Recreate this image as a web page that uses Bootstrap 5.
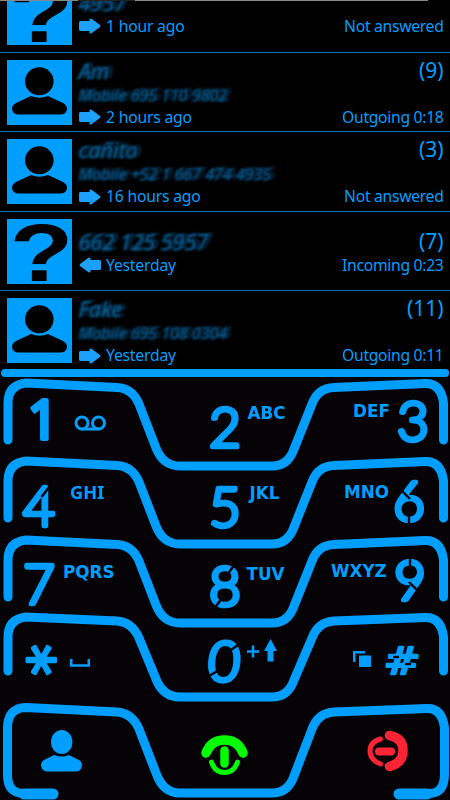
<!DOCTYPE html>
<html lang="en">
<head>
<meta charset="utf-8">
<meta name="viewport" content="width=device-width, initial-scale=1">
<title>Phone</title>
<link href="https://cdn.jsdelivr.net/npm/bootstrap@5.3.0/dist/css/bootstrap.min.css" rel="stylesheet">
<style>
:root{--neon:#009fff}
body{background:#050305;color:var(--neon);font-family:"Noto Sans","Open Sans",sans-serif}
.phone{width:450px;height:800px}
.call-list{height:370px;background:#000}
.strip{height:1px;background:linear-gradient(90deg,#888 0 78px,#222 78px 135px,#888 135px 428px,#000 428px);z-index:2}
.call{height:79.6px;flex:none;border-top:1px solid #0072b8;padding:7px 6.5px 0 7px}
.avatar{width:65px;height:65px;background:var(--neon)}
.info{padding-left:6px;height:72px;margin-top:-1px}
.who{font-size:21.5px;line-height:24px}
.num{font-size:16px;line-height:22px;padding-top:1px}
.smudge{color:#0b6aa8;font-style:italic;filter:blur(1.1px);opacity:.9;text-shadow:4px -1px 1px #04395c,-2px 1px 1px #04395c;white-space:nowrap;padding-left:1px}
.count{font-size:21px;line-height:24px;margin-top:-1px}
.when{font-size:15.7px;line-height:22px;letter-spacing:-.2px}
.when span+span{letter-spacing:-.3px}
.when svg{margin:-3px 5px 0 1px}
.solo{padding-top:12px}
.bar{height:8px;margin:-1px 1px 0;border-radius:4px;background:var(--neon);z-index:1}
.keypad{display:grid;grid-template-rows:78px 78.5px 77.5px 91px 97px}
.keyrow{display:grid;grid-template-columns:200px 100px 150px}
.outline{top:0;left:0;overflow:visible;pointer-events:none;fill:none;stroke:var(--neon);stroke-width:9;stroke-linecap:round;stroke-linejoin:round}
.key{position:relative}
.key svg{flex:none;overflow:visible}
.key b{font:bold 16.8px/20px "DejaVu Sans",sans-serif}
.key b.serifed{font:bold 18.3px/20px "Noto Sans",sans-serif}
.digit text{font:300 55px Lato,sans-serif;fill:var(--neon);stroke:var(--neon);stroke-width:4.5;stroke-linejoin:round;text-anchor:middle}
.digit line{stroke:#050305;stroke-width:2.4}
.k1{padding:18px 0 0 25px}.k1 .ic{margin:19px 0 0 15px}
.k2{padding:26px 0 0 7.5px}.k2 b{margin:-1px 0 0 6px}
.k3{padding:20px 0 0 53px}.k3 b{margin:3px 6px 0 0}
.k4{padding:27px 0 0 22px}.k4 b{margin:-1px 0 0 14px}
.k5{padding:28px 0 0 7.5px}.k5 b{margin:-1px 0 0 8px}
.k6{padding:22px 0 0 44px}.k6 b{margin:4px 3px 0 0}
.k7{padding:26px 0 0 22px}.k7 b{margin:1px 0 0 7px}
.k8{padding:28px 0 0 7.5px}.k8 b{margin:1px 0 0 5px}
.k9{padding:22px 0 0 31px}.k9 b{margin:4px 6px 0 0}
.ks{padding:31px 0 0 23px}.ks .ic{margin:16px 0 0 11px}
.k0{padding:26px 0 0 7px}.k0 .ic{margin:1px 0 0 6px}
.kh{padding:32px 0 0 53px}.kh .ic{margin:7px 13px 0 0}
.kc{padding:27px 0 0 41px}.kg{padding:32px 0 0 1px}.kr{padding:27px 0 0 67px}
.digit .star{font:62px "DejaVu Sans";stroke-width:3}
.digit .hash{font:38px "DejaVu Sans";stroke-width:2.6}
.digit .plain{font:400 54px "Noto Sans",sans-serif;stroke-width:4}
</style>
<script src="https://cdn.jsdelivr.net/npm/bootstrap@5.3.0/dist/js/bootstrap.bundle.min.js"></script>
</head>
<body>
<svg width="0" height="0" class="position-absolute">
<symbol id="person" viewBox="0 0 65 65"><ellipse cx="32.3" cy="21.3" rx="14.3" ry="14"/><path d="M24 36q8.500 3.500 17 0L56 43q4 2 4 6-.5 5-6 5.500H11q-5.500-.5-6-5.500 0-4 4-6z"/></symbol>
<symbol id="arrow" viewBox="0 0 22 16"><path d="M1.500 3h9V1.500Q10.500 0 12.500 .7l8.500 6.300q1 1 0 2l-8.500 6.300q-2 .7-2-.8V13h-9Q0 13 0 11.500V4.500Q0 3 1.500 3z" fill="#1ca0fa"/></symbol>
</svg>
<main class="phone position-relative overflow-hidden d-flex flex-column">
<div class="strip position-absolute top-0 start-0 w-100"></div>
<section class="call-list d-flex flex-column justify-content-end overflow-hidden">
  <article class="call d-flex">
    <svg class="avatar"><text transform="translate(2.500 62) scale(1.290 1)" font-family="Liberation Sans" font-weight="bold" font-size="81">?</text></svg>
    <div class="info flex-grow-1 solo">
      <div class="d-flex justify-content-between"><span class="who smudge">4957</span></div>
      <div class="when d-flex justify-content-between"><span><svg width="22" height="16"><use href="#arrow"/></svg>1 hour ago</span><span>Not answered</span></div>
    </div>
  </article>
  <article class="call d-flex">
    <svg class="avatar"><use href="#person"/></svg>
    <div class="info flex-grow-1">
      <div class="d-flex justify-content-between"><span class="who smudge">Am</span><span class="count">(9)</span></div>
      <div class="num smudge">Mobile 695 110 9802</div>
      <div class="when d-flex justify-content-between"><span><svg width="22" height="16"><use href="#arrow"/></svg>2 hours ago</span><span>Outgoing 0:18</span></div>
    </div>
  </article>
  <article class="call d-flex">
    <svg class="avatar"><use href="#person"/></svg>
    <div class="info flex-grow-1">
      <div class="d-flex justify-content-between"><span class="who smudge">cañito</span><span class="count">(3)</span></div>
      <div class="num smudge">Mobile +52 1 667 474 4935</div>
      <div class="when d-flex justify-content-between"><span><svg width="22" height="16"><use href="#arrow"/></svg>16 hours ago</span><span>Not answered</span></div>
    </div>
  </article>
  <article class="call d-flex">
    <svg class="avatar"><text transform="translate(2.500 62) scale(1.290 1)" font-family="Liberation Sans" font-weight="bold" font-size="81">?</text></svg>
    <div class="info flex-grow-1 solo">
      <div class="d-flex justify-content-between"><span class="who smudge">662 125 5957</span><span class="count">(7)</span></div>
      <div class="when d-flex justify-content-between"><span><svg width="22" height="16"><use href="#arrow" transform="translate(22) scale(-1 1)"/></svg>Yesterday</span><span>Incoming 0:23</span></div>
    </div>
  </article>
  <article class="call d-flex">
    <svg class="avatar"><use href="#person"/></svg>
    <div class="info flex-grow-1">
      <div class="d-flex justify-content-between"><span class="who smudge">Fake</span><span class="count">(11)</span></div>
      <div class="num smudge">Mobile 695 108 0304</div>
      <div class="when d-flex justify-content-between"><span><svg width="22" height="16"><use href="#arrow"/></svg>Yesterday</span><span>Outgoing 0:11</span></div>
    </div>
  </article>
</section>
<div class="bar"></div>
<section class="keypad mt-auto">
  <div class="keyrow position-relative">
    <svg class="outline position-absolute" width="450" height="90"><path d="M8 62V25Q8 7 26 5L117 9.500Q132 10 139 26L156 70Q163 88 180 88H272Q288 88 294 71L312 26Q318 10 334 9.500L425 5.500Q441 5 443.500 25V62"/></svg>
    <div class="key k1 d-flex align-items-start"><svg class="digit" width="34" height="46"><text class="plain" x="18" y="43">1</text></svg>
      <svg class="ic" width="32" height="16" fill="none" stroke="#009fff" stroke-width="3"><circle cx="8" cy="8" r="6"/><circle cx="24.500" cy="8" r="6"/><path d="M8 14H24.500"/></svg></div>
    <div class="key k2 d-flex align-items-start"><svg class="digit" width="34" height="46"><text x="17" y="43">2</text></svg><b>ABC</b></div>
    <div class="key k3 d-flex align-items-start"><b>DEF</b><svg class="digit" width="34" height="46"><text x="17" y="43">3</text></svg></div>
  </div>
  <div class="keyrow position-relative">
    <svg class="outline position-absolute" width="450" height="90"><path d="M8 62V25Q8 7 26 5L117 9.500Q132 10 139 26L156 70Q163 88 180 88H272Q288 88 294 71L312 26Q318 10 334 9.500L425 5.500Q441 5 443.500 25V62"/></svg>
    <div class="key k4 d-flex align-items-start"><svg class="digit" width="34" height="46"><text x="17" y="43">4</text><line x1="19.500" y1="14" x2="28" y2="3"/></svg><b class="serifed">GHI</b></div>
    <div class="key k5 d-flex align-items-start"><svg class="digit" width="34" height="46"><text x="17" y="43">5</text></svg><b>JKL</b></div>
    <div class="key k6 d-flex align-items-start"><b>MNO</b><svg class="digit" width="34" height="46"><text x="17" y="43">6</text><line x1="17" y1="35" x2="17" y2="47"/><line x1="10" y1="13" x2="18" y2="21"/></svg></div>
  </div>
  <div class="keyrow position-relative">
    <svg class="outline position-absolute" width="450" height="90"><path d="M8 62V25Q8 7 26 5L117 9.500Q132 10 139 26L156 70Q163 88 180 88H272Q288 88 294 71L312 26Q318 10 334 9.500L425 5.500Q441 5 443.500 25V62"/></svg>
    <div class="key k7 d-flex align-items-start"><svg class="digit" width="34" height="46"><text x="17" y="43">7</text></svg><b>PQRS</b></div>
    <div class="key k8 d-flex align-items-start"><svg class="digit" width="34" height="46"><text x="17" y="43">8</text><line x1="19" y1="12" x2="27" y2="1"/><line x1="6" y1="46" x2="14" y2="35"/></svg><b>TUV</b></div>
    <div class="key k9 d-flex align-items-start"><b>WXYZ</b><svg class="digit" width="34" height="46"><text x="17" y="43">9</text><line x1="17" y1="0" x2="17" y2="11"/><line x1="16" y1="25" x2="24" y2="33"/></svg></div>
  </div>
  <div class="keyrow position-relative">
    <svg class="outline position-absolute" width="450" height="90"><path d="M8 59V25Q8 7 26 5L117 9Q132 10 139 26L156 67Q163 85 180 85H272Q288 85 294 68L312 26Q318 10 334 9L425 5.500Q441 5 443.500 25V59"/></svg>
    <div class="key ks d-flex align-items-start"><svg class="digit" width="36" height="34"><text class="star" transform="translate(18 17) rotate(90)" x="0" y="32">*</text></svg>
      <svg class="ic" width="20" height="8" fill="none" stroke="#009fff" stroke-width="2.500"><path d="M1.250 0V6.500H18.750V0"/></svg></div>
    <div class="key k0 d-flex align-items-start"><svg class="digit" width="34" height="46"><text x="17" y="43" transform="translate(2) skewX(-4)">0</text><line x1="21" y1="14" x2="31" y2="7"/><line x1="2" y1="38" x2="12" y2="32"/></svg>
      <svg class="ic" width="30" height="23"><path d="M0 12.500H12M6 6.500V18.500" stroke="#009fff" stroke-width="2.500"/><path d="M23.500 0L30 12H26.500V22.500H20.500V12H17z" fill="#009fff"/></svg></div>
    <div class="key kh d-flex align-items-start"><svg class="ic" width="18" height="16"><path d="M1.250 11V1.250H12" fill="none" stroke="#009fff" stroke-width="2.500"/><path d="M6 4.500H18V16H6z" fill="#009fff"/></svg>
      <svg class="digit" width="36" height="32"><text class="hash" transform="translate(18 30) scale(1.150 1)">#</text><line x1="9" y1="13" x2="15" y2="13"/><line x1="21" y1="20" x2="27" y2="20"/></svg></div>
  </div>
  <div class="keyrow position-relative">
    <svg class="outline position-absolute" width="450" height="97"><path d="M53 90.500H24Q7.500 90 7.500 72V25Q7.500 5 26 4.500L117 9Q132 10 139 26L156 70Q163 90 180 90H272Q288 90 294 73L312 26Q318 10 334 9L427 5.500Q442 5 444.500 25V72Q444 90 430 90.500H399"/><path d="M53 91H24M427 91H399" stroke-width="11"/></svg>
    <div class="key kc"><svg width="41" height="42" fill="#009fff"><ellipse cx="20.700" cy="12" rx="10.700" ry="12"/><path d="M13 25q8 3 15 0l10 5q3 2 3 5-.5 6-6 6.500H6q-5.500-.5-6-6.500 0-3 3-5z"/></svg></div>
    <div class="key kg"><svg width="47" height="41" fill="none" stroke="#0f0" stroke-linecap="round"><path d="M5 18Q10 5 23.500 5T42 18" stroke-width="9.500"/><path d="M10.500 27Q14 37.500 23.500 37.500T36.500 27" stroke-width="5"/><path d="M23.500 15.500V28.500" stroke-width="8.500"/></svg></div>
    <div class="key kr"><svg width="41" height="42" fill="none" stroke="#ff2435" stroke-linecap="round"><path d="M22.500 5.500Q36 8 36 20.500T22.500 36.500" stroke-width="9.500"/><path d="M13.500 9Q3 12 3 21T13.500 34" stroke-width="5"/><path d="M12 21.500H24" stroke-width="8"/></svg></div>
  </div>
</section>
</main>
</body>
</html>
